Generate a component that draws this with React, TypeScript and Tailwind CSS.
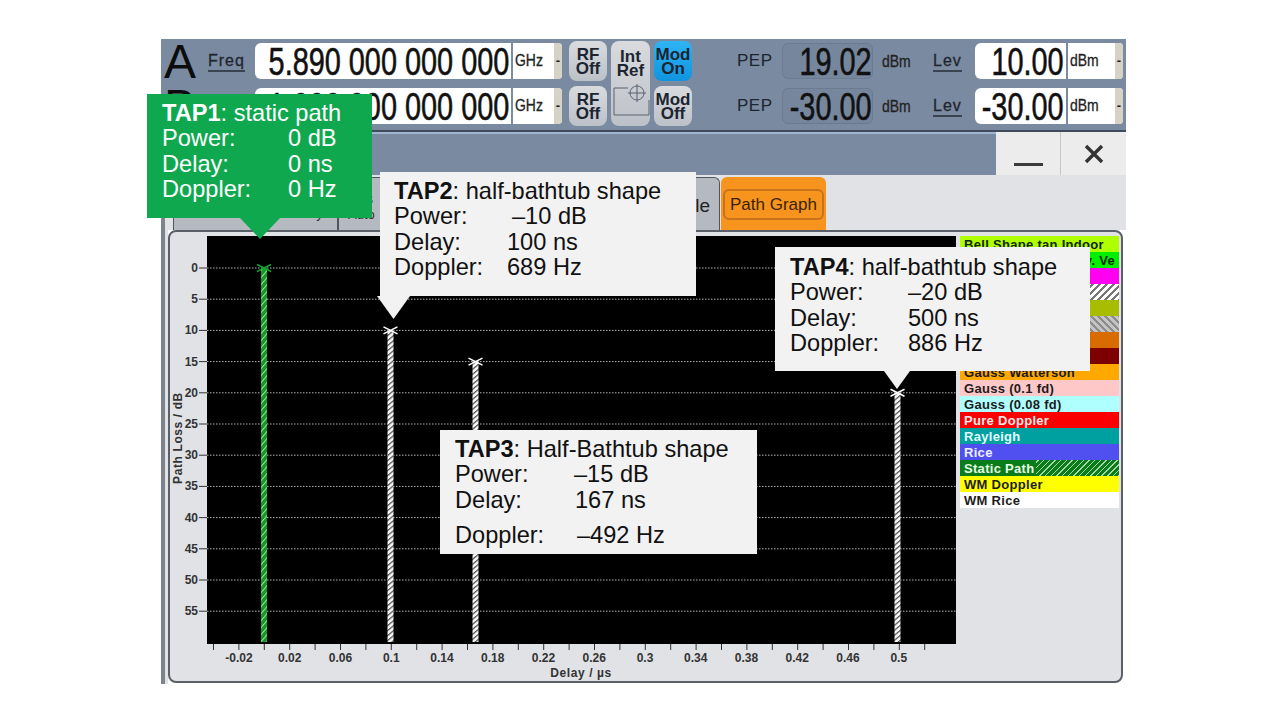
import type { ReactNode } from 'react'

const yTicks = [0, 5, 10, 15, 20, 25, 30, 35, 40, 45, 50, 55]
const xLabels = ['-0.02', '0.02', '0.06', '0.1', '0.14', '0.18', '0.22', '0.26', '0.3', '0.34', '0.38', '0.42', '0.46', '0.5']
const yOf = (v: number) => 268 + v * 6.24

const paths = [
  { x: 264, top: 0, fill: 'url(#hatchGreen)', mark: '#14a02c' },
  { x: 390.5, top: 10, fill: 'url(#hatchWhite)', mark: '#ffffff' },
  { x: 475.5, top: 15, fill: 'url(#hatchWhite)', mark: '#ffffff' },
  { x: 897.5, top: 20, fill: 'url(#hatchWhite)', mark: '#ffffff' },
]

const legend = [
  { label: 'Bell Shape tan Indoor', cls: 'bg-[#aeff00] text-[#10240a]' },
  { label: 'Bell Shape Nov. Ve', cls: 'bg-[#00f000] text-[#10240a] justify-end' },
  { label: '', cls: 'bg-[#ff00f0]' },
  { label: '', cls: 'bg-[repeating-linear-gradient(135deg,#ffffff_0,#ffffff_3px,#777777_3px,#777777_5px)]' },
  { label: '', cls: 'bg-[#a8bc00]' },
  { label: '', cls: 'bg-[repeating-linear-gradient(45deg,#c4c4c4_0,#c4c4c4_3px,#8c8c8c_3px,#8c8c8c_5px)]' },
  { label: '', cls: 'bg-[#d96c00]' },
  { label: '', cls: 'bg-[#7d0000]' },
  { label: 'Gauss Watterson', cls: 'bg-[#ffa800] text-[#1c1c1c]' },
  { label: 'Gauss (0.1 fd)', cls: 'bg-[#ffc8c8] text-[#1c1c1c]' },
  { label: 'Gauss (0.08 fd)', cls: 'bg-[#b0ffff] text-[#1c1c1c]' },
  { label: 'Pure Doppler', cls: 'bg-[#fa0000] text-[#ffe9e9]' },
  { label: 'Rayleigh', cls: 'bg-[#00a0a0] text-[#e2ffff]' },
  { label: 'Rice', cls: 'bg-[#5050f0] text-[#f0f0ff]' },
  { label: 'Static Path', cls: 'bg-[linear-gradient(90deg,#0a7d1a_0,#0a7d1a_48%,transparent_48%),repeating-linear-gradient(135deg,#0a7d1a_0,#0a7d1a_3px,#a7d8ad_3px,#a7d8ad_4px)] text-[#e6ffe6]' },
  { label: 'WM Doppler', cls: 'bg-[#ffff00] text-[#1c1c1c]' },
  { label: 'WM Rice', cls: 'bg-white text-[#1c1c1c]' },
]

// condensed look of the instrument's digits
function Digits({ children }: { children: ReactNode }) {
  return <span className="inline-block whitespace-pre origin-right scale-x-[.74] text-[39px] leading-none text-[#111] [-webkit-text-stroke:0.6px_#111]">{children}</span>
}

function Unit({ children }: { children: ReactNode }) {
  return <span className="inline-block origin-left scale-x-[.82] text-[17px] leading-none text-[#222] [-webkit-text-stroke:0.3px_#222]">{children}</span>
}

function EntryField({ value, unit, width, unitWidth }: { value: string; unit: string; width: string; unitWidth: string }) {
  return (
    <div className="flex h-full gap-[2px]">
      <div className={`${width} flex items-center justify-end rounded-l-md bg-white pr-[2px]`}><Digits>{value}</Digits></div>
      <div className={`${unitWidth} flex items-center rounded-r-sm bg-white pl-[2px]`}>
        <div className="flex-1"><Unit>{unit}</Unit></div>
        <div className="flex h-full w-[8px] items-center justify-center rounded-r-sm bg-[#d6d2c6] text-[13px] font-bold text-[#222]">-</div>
      </div>
    </div>
  )
}

function RoundButton({ top, bottom, on }: { top: string; bottom: string; on?: boolean }) {
  return (
    <div className={`-my-[2px] flex h-[40px] w-[38px] flex-col items-center justify-center rounded-lg pt-[2px] text-[17px] font-bold leading-[14px] text-[#1c2430] ${on ? 'bg-[linear-gradient(#2fb4f4,#0f94e0)]' : 'bg-[linear-gradient(#d9dbde,#bcc1c8)]'}`}>
      <span>{top}</span>
      <span>{bottom}</span>
    </div>
  )
}

function Underlined({ children }: { children: ReactNode }) {
  return <span className="inline-block border-b-2 border-[#3a4350] text-[16px] leading-[19px] tracking-[1px] text-[#1f2630] [-webkit-text-stroke:0.3px_#1f2630]">{children}</span>
}

function Readout({ value }: { value: string }) {
  return <div className="flex h-full w-[91px] items-center justify-end rounded-md border border-[#6c7b90] bg-[#76869c]"><Digits>{value}</Digits></div>
}

const topRowCols = 'grid-cols-[47px_47px_314px_42px_43px_83px_45px_100px_51px_42px_148px]'

function TopBar() {
  return (
    <div className={`grid h-[91px] ${topRowCols} grid-rows-[36px_36px] content-start gap-y-[9px] bg-[#7a8aa0] pt-[4px]`}>
      <div className="pl-[3px] text-[48px] leading-[38px] text-[#0c0c0c]">A</div>
      <div className="flex items-center"><Underlined>Freq</Underlined></div>
      <EntryField value="5.890 000 000 000" unit="GHz" width="w-[256px]" unitWidth="w-[49px]" />
      <RoundButton top="RF" bottom="Off" />
      <div className="row-span-2 -my-[2px] flex w-[39px] flex-col items-center rounded-lg bg-[linear-gradient(#d9dbde,#bcc1c8)] pt-[9px] text-[17px] font-bold leading-[14px] text-[#1c2430]">
        <span>Int</span>
        <span>Ref</span>
        <svg width="38" height="34" viewBox="0 0 38 34" fill="none" stroke="#59626e" strokeWidth="1" className="mt-[6px]">
          <path d="M16 4H2V31H37V16" />
          <circle cx="25" cy="9" r="7" />
          <path d="M25 0V18M16 9H34" />
        </svg>
      </div>
      <RoundButton top="Mod" bottom="On" on />
      <div className="flex items-center text-[17px] tracking-[.5px] text-[#1c2430]">PEP</div>
      <Readout value="19.02" />
      <div className="flex items-center"><Unit>dBm</Unit></div>
      <div className="flex items-center"><Underlined>Lev</Underlined></div>
      <EntryField value="10.00" unit="dBm" width="w-[91px]" unitWidth="w-[55px]" />

      <div className="pl-[3px] text-[48px] leading-[38px] text-[#0c0c0c]">B</div>
      <div className="flex items-center"><Underlined>Freq</Underlined></div>
      <EntryField value="1.000 000 000 000" unit="GHz" width="w-[256px]" unitWidth="w-[49px]" />
      <RoundButton top="RF" bottom="Off" />
      <RoundButton top="Mod" bottom="Off" />
      <div className="flex items-center text-[17px] tracking-[.5px] text-[#1c2430]">PEP</div>
      <Readout value="-30.00" />
      <div className="flex items-center"><Unit>dBm</Unit></div>
      <div className="flex items-center"><Underlined>Lev</Underlined></div>
      <EntryField value="-30.00" unit="dBm" width="w-[91px]" unitWidth="w-[55px]" />
    </div>
  )
}

function TitleBar() {
  return (
    <div className="flex h-[45px] justify-end border-t-2 border-[#3f4a5a] bg-[#7a8aa0] shadow-[inset_0_2px_0_#a3b6cf]">
      <div className="flex w-[65px] items-end justify-center border-r border-[#c4c6ca] bg-[#ececec] pb-[9px]"><div className="h-[3px] w-[29px] bg-[#3a3a3a]" /></div>
      <div className="flex w-[65px] items-center justify-center bg-[#ececec]">
        <svg width="20" height="20" viewBox="0 0 20 20" stroke="#333" strokeWidth="3.4"><path d="M2 2L18 18M18 2L2 18" /></svg>
      </div>
    </div>
  )
}

function Tabs() {
  return (
    <div className="flex h-[55px] items-end bg-[#e0e2e6] pl-[8px]">
      <div className="flex h-[53px] w-[165px] items-end justify-center rounded-t-md border border-b-0 border-[#4f5660] bg-[#b5bac1] pb-[6px] text-[14px] text-[#333]">Standard / Fine Delay</div>
      <div className="flex h-[53px] w-[382px] items-end justify-between rounded-t-md border border-b-0 border-[#4f5660] bg-[#b5bac1] pb-[7px] pl-[9px] pr-[9px] text-[#222]">
        <div className="flex w-[25px] flex-col whitespace-nowrap">
          <span className="self-end text-[16px] leading-[17px]">Settings</span>
          <span className="text-[13px] leading-[16px] text-[#333]">Auto</span>
        </div>
        <span className="mb-[8px] text-[19px] leading-[19px]">Table</span>
      </div>
      <div className="ml-[1px] flex h-[53px] w-[105px] items-center justify-center rounded-t-md bg-[#f7941d] pt-[1px]">
        <div className="rounded-md border-2 border-[#c8721a] px-[5px] py-[4px] text-[17px] leading-[19px] text-[#3a2206]">Path Graph</div>
      </div>
    </div>
  )
}

function Chart() {
  const minorTicks = Array.from({ length: 29 }, (_, i) => 213.5 + i * 25.4)
  return (
    <svg width="788" height="451" viewBox="170 232 788 451" fontFamily="'Liberation Sans', Arial, sans-serif" fontWeight="700" fontSize="12" fill="#333" className="shrink-0">
      <defs>
        <pattern id="hatchWhite" width="6" height="5" patternUnits="userSpaceOnUse" patternTransform="skewY(-40)">
          <rect width="6" height="5" fill="#f4f4f4" />
          <rect width="6" height="1.6" fill="#555" />
        </pattern>
        <pattern id="hatchGreen" width="6" height="7" patternUnits="userSpaceOnUse" patternTransform="skewY(-50)">
          <rect width="6" height="7" fill="#109a26" />
          <rect width="6" height="1.5" fill="#a5e0a5" />
        </pattern>
      </defs>
      <rect x="207" y="236" width="749" height="408" fill="#000" />
      {yTicks.map(v => (
        <g key={v}>
          <line x1="207" x2="956" y1={yOf(v)} y2={yOf(v)} stroke="#b4b4b4" strokeWidth="1" strokeDasharray="1.5 1.5" />
          <line x1="199" x2="207" y1={yOf(v)} y2={yOf(v)} stroke="#333" strokeWidth="1" />
          <text x="198" y={yOf(v) + 4} textAnchor="end">{v}</text>
        </g>
      ))}
      {minorTicks.map(x => <line key={x} x1={x} x2={x} y1="644" y2="650" stroke="#333" strokeWidth="1" />)}
      {xLabels.map((l, i) => <text key={l} x={239 + i * 50.75} y="662" textAnchor="middle">{l}</text>)}
      <text x="581" y="677" textAnchor="middle" letterSpacing=".6">Delay  / µs</text>
      <text transform="translate(182 438) rotate(-90)" textAnchor="middle" letterSpacing=".6">Path Loss / dB</text>
      {paths.map(p => (
        <g key={p.x}>
          <rect x={p.x - 3} y={yOf(p.top)} width="6" height={642 - yOf(p.top)} fill={p.fill} />
          <path d={`M${p.x - 7} ${yOf(p.top) - 3.5}L${p.x + 7} ${yOf(p.top) + 3.5}M${p.x + 7} ${yOf(p.top) - 3.5}L${p.x - 7} ${yOf(p.top) + 3.5}`} stroke={p.mark} strokeWidth="1.6" />
        </g>
      ))}
    </svg>
  )
}

function Legend() {
  return (
    <div className="ml-[2px] mt-[4px] w-[159px] self-start">
      {legend.map((row, i) => (
        <div key={i} className={`flex h-[16px] items-center px-[4px] text-[13px] font-bold leading-none tracking-[.3px] ${row.cls}`}>{row.label}</div>
      ))}
    </div>
  )
}

type Line = { label: string; value: string; left: number; top: number }

const callouts: { pos: string; arrow?: string; text: string; head: string; sub: string; lines: Line[] }[] = [
  {
    pos: 'left-[147px] top-[94px] w-[225px] bg-[#0fa84f]',
    arrow: 'left-[93px] top-[124px] h-[21px] w-[40px] bg-[#0fa84f]',
    text: 'text-white pl-[15px] pt-[7px]',
    head: 'TAP1',
    sub: ': static path',
    lines: [
      { label: 'Power:', value: '0 dB', left: 126, top: 0 },
      { label: 'Delay:', value: '0 ns', left: 126, top: 0 },
      { label: 'Doppler:', value: '0 Hz', left: 126, top: 0 },
    ],
  },
  {
    pos: 'left-[380px] top-[172px] w-[316px] bg-[#f2f2f2]',
    arrow: 'left-[-3px] top-[124px] h-[23px] w-[33px] bg-[#f2f2f2]',
    text: 'text-[#111] pl-[14px] pt-[7px]',
    head: 'TAP2',
    sub: ': half-bathtub shape',
    lines: [
      { label: 'Power:', value: '–10 dB', left: 118, top: 0 },
      { label: 'Delay:', value: '100 ns', left: 113, top: 0 },
      { label: 'Doppler:', value: '689 Hz', left: 113, top: 0 },
    ],
  },
  {
    pos: 'left-[440px] top-[430px] w-[317px] bg-[#f2f2f2]',
    text: 'text-[#111] pl-[15px] pt-[7px]',
    head: 'TAP3',
    sub: ': Half-Bathtub shape',
    lines: [
      { label: 'Power:', value: '–15 dB', left: 119, top: 0 },
      { label: 'Delay:', value: '167 ns', left: 120, top: 0 },
      { label: 'Doppler:', value: '–492 Hz', left: 122, top: 10 },
    ],
  },
  {
    pos: 'left-[775px] top-[247px] w-[315px] bg-[#f2f2f2]',
    arrow: 'left-[109px] top-[124px] h-[18px] w-[26px] bg-[#f2f2f2]',
    text: 'text-[#111] pl-[15px] pt-[8px]',
    head: 'TAP4',
    sub: ': half-bathtub shape',
    lines: [
      { label: 'Power:', value: '–20 dB', left: 118, top: 0 },
      { label: 'Delay:', value: '500 ns', left: 118, top: 0 },
      { label: 'Doppler:', value: '886 Hz', left: 118, top: 0 },
    ],
  },
]

function Callout({ c }: { c: (typeof callouts)[number] }) {
  return (
    <div className={`absolute h-[124px] text-[23.6px] leading-[25.4px] ${c.pos}`}>
      <div className={c.text}>
        <div className="whitespace-pre"><b>{c.head}</b>{c.sub}</div>
        {c.lines.map(l => (
          <div key={l.label} className="relative whitespace-pre" style={{ marginTop: l.top }}>
            {l.label}
            <span className="absolute top-0" style={{ left: l.left }}>{l.value}</span>
          </div>
        ))}
      </div>
      {c.arrow && <div className={`absolute [clip-path:polygon(0_0,100%_0,50%_100%)] ${c.arrow}`} />}
    </div>
  )
}

export default function App() {
  return (
    <div className="relative h-[720px] w-[1280px] overflow-hidden bg-white pl-[161px] pt-[39px] font-['Liberation_Sans',Arial,sans-serif]">
      <div className="w-[965px]">
        <TopBar />
        <TitleBar />
        <div className="h-[509px] border-l-4 border-[#7d848f]">
          <Tabs />
          <div className="flex h-[454px]">
            <div className="w-[3px] bg-[#e0e2e6]" />
            <div className="flex h-[453px] w-[955px] rounded-lg border-2 border-[#5b6068] bg-[#e0e2e6]">
              <Chart />
              <Legend />
            </div>
          </div>
        </div>
      </div>
      {callouts.map(c => <Callout key={c.head} c={c} />)}
    </div>
  )
}
